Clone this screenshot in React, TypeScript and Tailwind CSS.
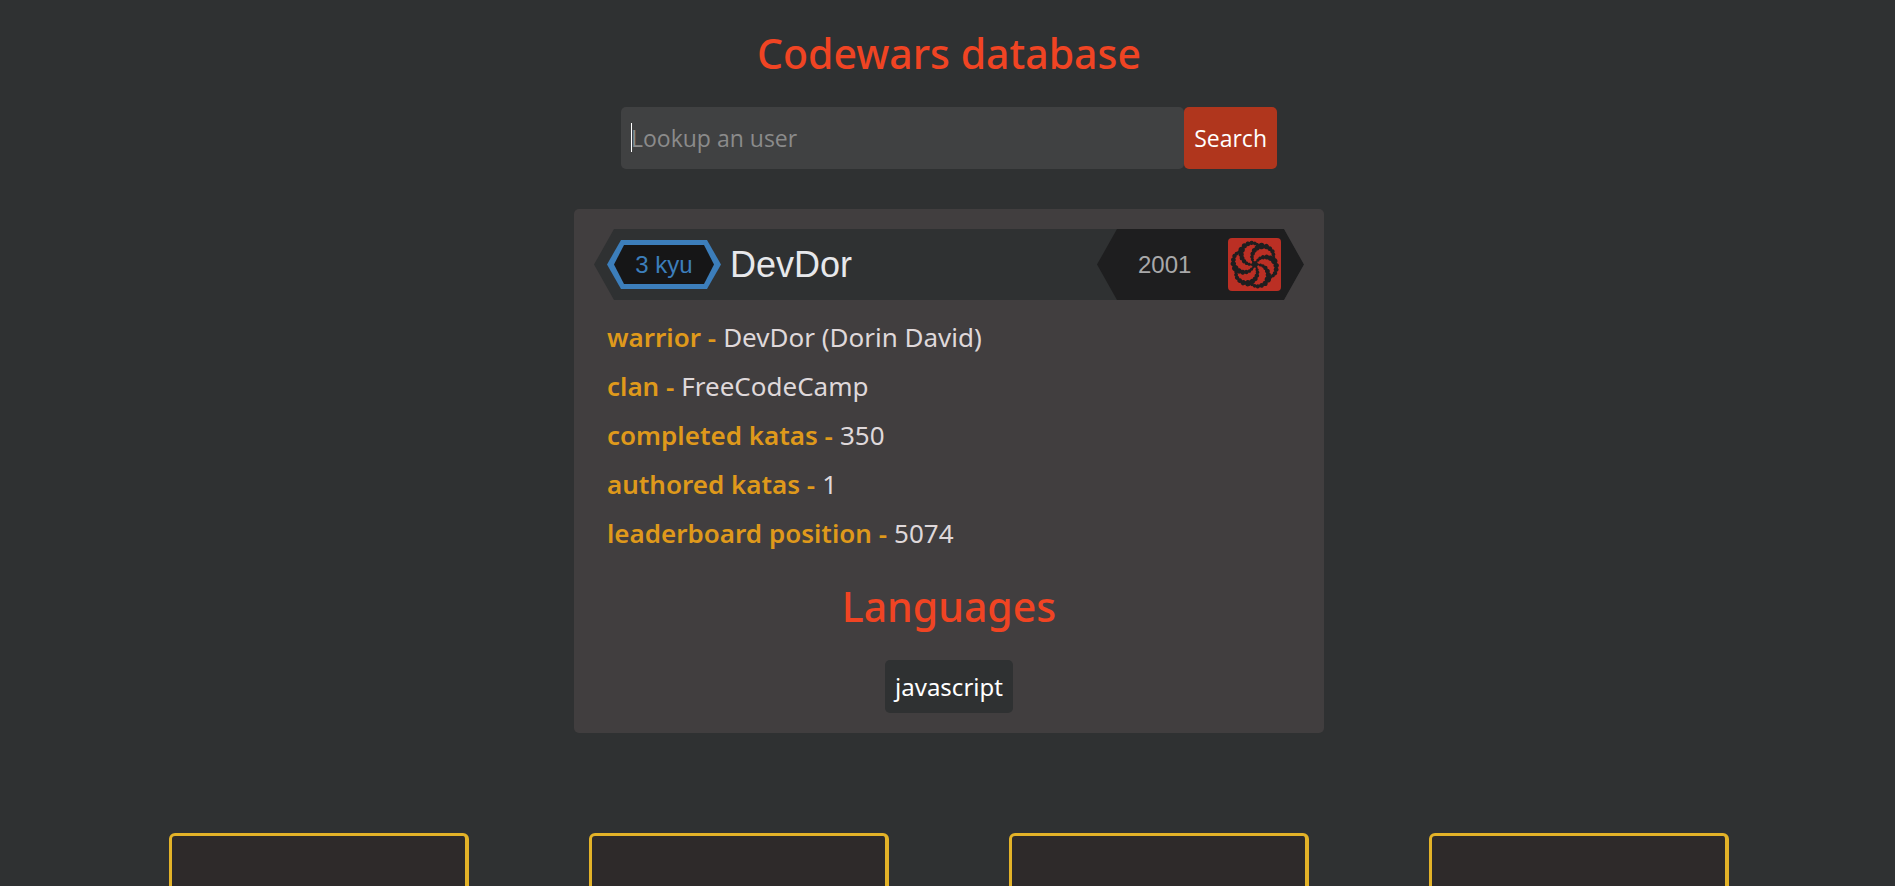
import { useState } from 'react';
import { SiCodewars } from 'react-icons/si';

const facts = [
  { label: 'warrior', value: 'DevDor (Dorin David)' },
  { label: 'clan', value: 'FreeCodeCamp' },
  { label: 'completed katas', value: '350' },
  { label: 'authored katas', value: '1' },
  { label: 'leaderboard position', value: '5074' },
];

const languages = ['javascript'];

function SearchForm() {
  const [query, setQuery] = useState('');

  return (
    <form
      className="mt-[26px] flex h-[62px] w-full max-w-[656px] shrink-0 font-['Open_Sans',sans-serif] text-[23px]"
      onSubmit={(e) => e.preventDefault()}
    >
      <div className="relative min-w-0 flex-1">
        <input
          type="text"
          aria-label="Lookup an user"
          placeholder="Lookup an user"
          value={query}
          onChange={(e) => setQuery(e.target.value)}
          className="size-full rounded-[5px] bg-[#404142] px-[10px] text-white caret-white outline-none placeholder:text-[#8b8b8b]"
        />
        {query === '' && <span className="pointer-events-none absolute top-4 left-[10px] h-[29px] w-px bg-white" />}
      </div>
      <button type="submit" className="rounded-[5px] bg-[#b0361d] px-[10px] text-white">
        Search
      </button>
    </form>
  );
}

function RankBadge() {
  return (
    <div className="flex h-[71px] items-center bg-[#2f3132] pl-[13px] font-['Liberation_Sans',Arial,sans-serif] [clip-path:polygon(20px_0,calc(100%-20px)_0,100%_50%,calc(100%-20px)_100%,20px_100%,0_50%)]">
      <div className="grid h-[49px] w-[114px] place-items-center bg-[#3c7ebb] [clip-path:polygon(14px_0,calc(100%-14px)_0,100%_50%,calc(100%-14px)_100%,14px_100%,0_50%)]">
        <div className="grid h-[39px] w-[100px] place-items-center bg-[#161617] text-2xl text-[#3c7ebb] [clip-path:polygon(10px_0,calc(100%-10px)_0,100%_50%,calc(100%-10px)_100%,10px_100%,0_50%)]">
          3 kyu
        </div>
      </div>
      <span className="ml-[9px] text-4xl text-[#e7e8eb]">DevDor</span>
      <div className="ml-auto flex h-full w-[207px] items-center justify-between bg-[#1e1e1f] pr-[23px] pl-[41px] [clip-path:polygon(20px_0,calc(100%-20px)_0,100%_50%,calc(100%-20px)_100%,20px_100%,0_50%)]">
        <span className="text-2xl text-[#a9a9aa]">2001</span>
        <span className="flex size-[53px] items-center justify-center overflow-hidden rounded text-[#bb2f24]">
          <SiCodewars size={57} className="shrink-0" />
        </span>
      </div>
    </div>
  );
}

function Profile() {
  return (
    <section className="mt-10 w-full max-w-[750px] shrink-0 rounded-[5px] bg-[#413e3f] p-5">
      <RankBadge />
      <dl className="mt-[13px] px-[13px] text-[26px] leading-[49px]">
        {facts.map(({ label, value }) => (
          <div key={label} className="flex gap-[7px]">
            <dt className="font-semibold text-[#df991b]">{label} -</dt>
            <dd className="text-[#dfd8da]">{value}</dd>
          </div>
        ))}
      </dl>
      <h2 className="mt-5 text-center text-[41px] leading-[56px] font-medium text-[#f04423]">Languages</h2>
      <ul className="mt-[26px] flex justify-center gap-2">
        {languages.map((name) => (
          <li key={name} className="rounded-[5px] bg-[#2f3132] p-[10px] text-2xl leading-[33px] text-white">
            {name}
          </li>
        ))}
      </ul>
    </section>
  );
}

export default function App() {
  return (
    <main className="flex h-screen flex-col items-center overflow-hidden bg-[#2f3132] pt-[25px] pl-[3px] font-['Noto_Sans',sans-serif]">
      <h1 className="text-[41px] leading-[56px] font-medium text-[#f04423]">Codewars database</h1>
      <SearchForm />
      <Profile />
      <div className="mt-[100px] flex w-full max-w-[1680px] shrink-0 justify-around">
        {[0, 1, 2, 3].map((i) => (
          <article
            key={i}
            className="h-[400px] w-[300px] rounded-[6px] border-[3px] border-r-4 border-[#e3b228] bg-[#2e2a2a]"
          />
        ))}
      </div>
    </main>
  );
}
